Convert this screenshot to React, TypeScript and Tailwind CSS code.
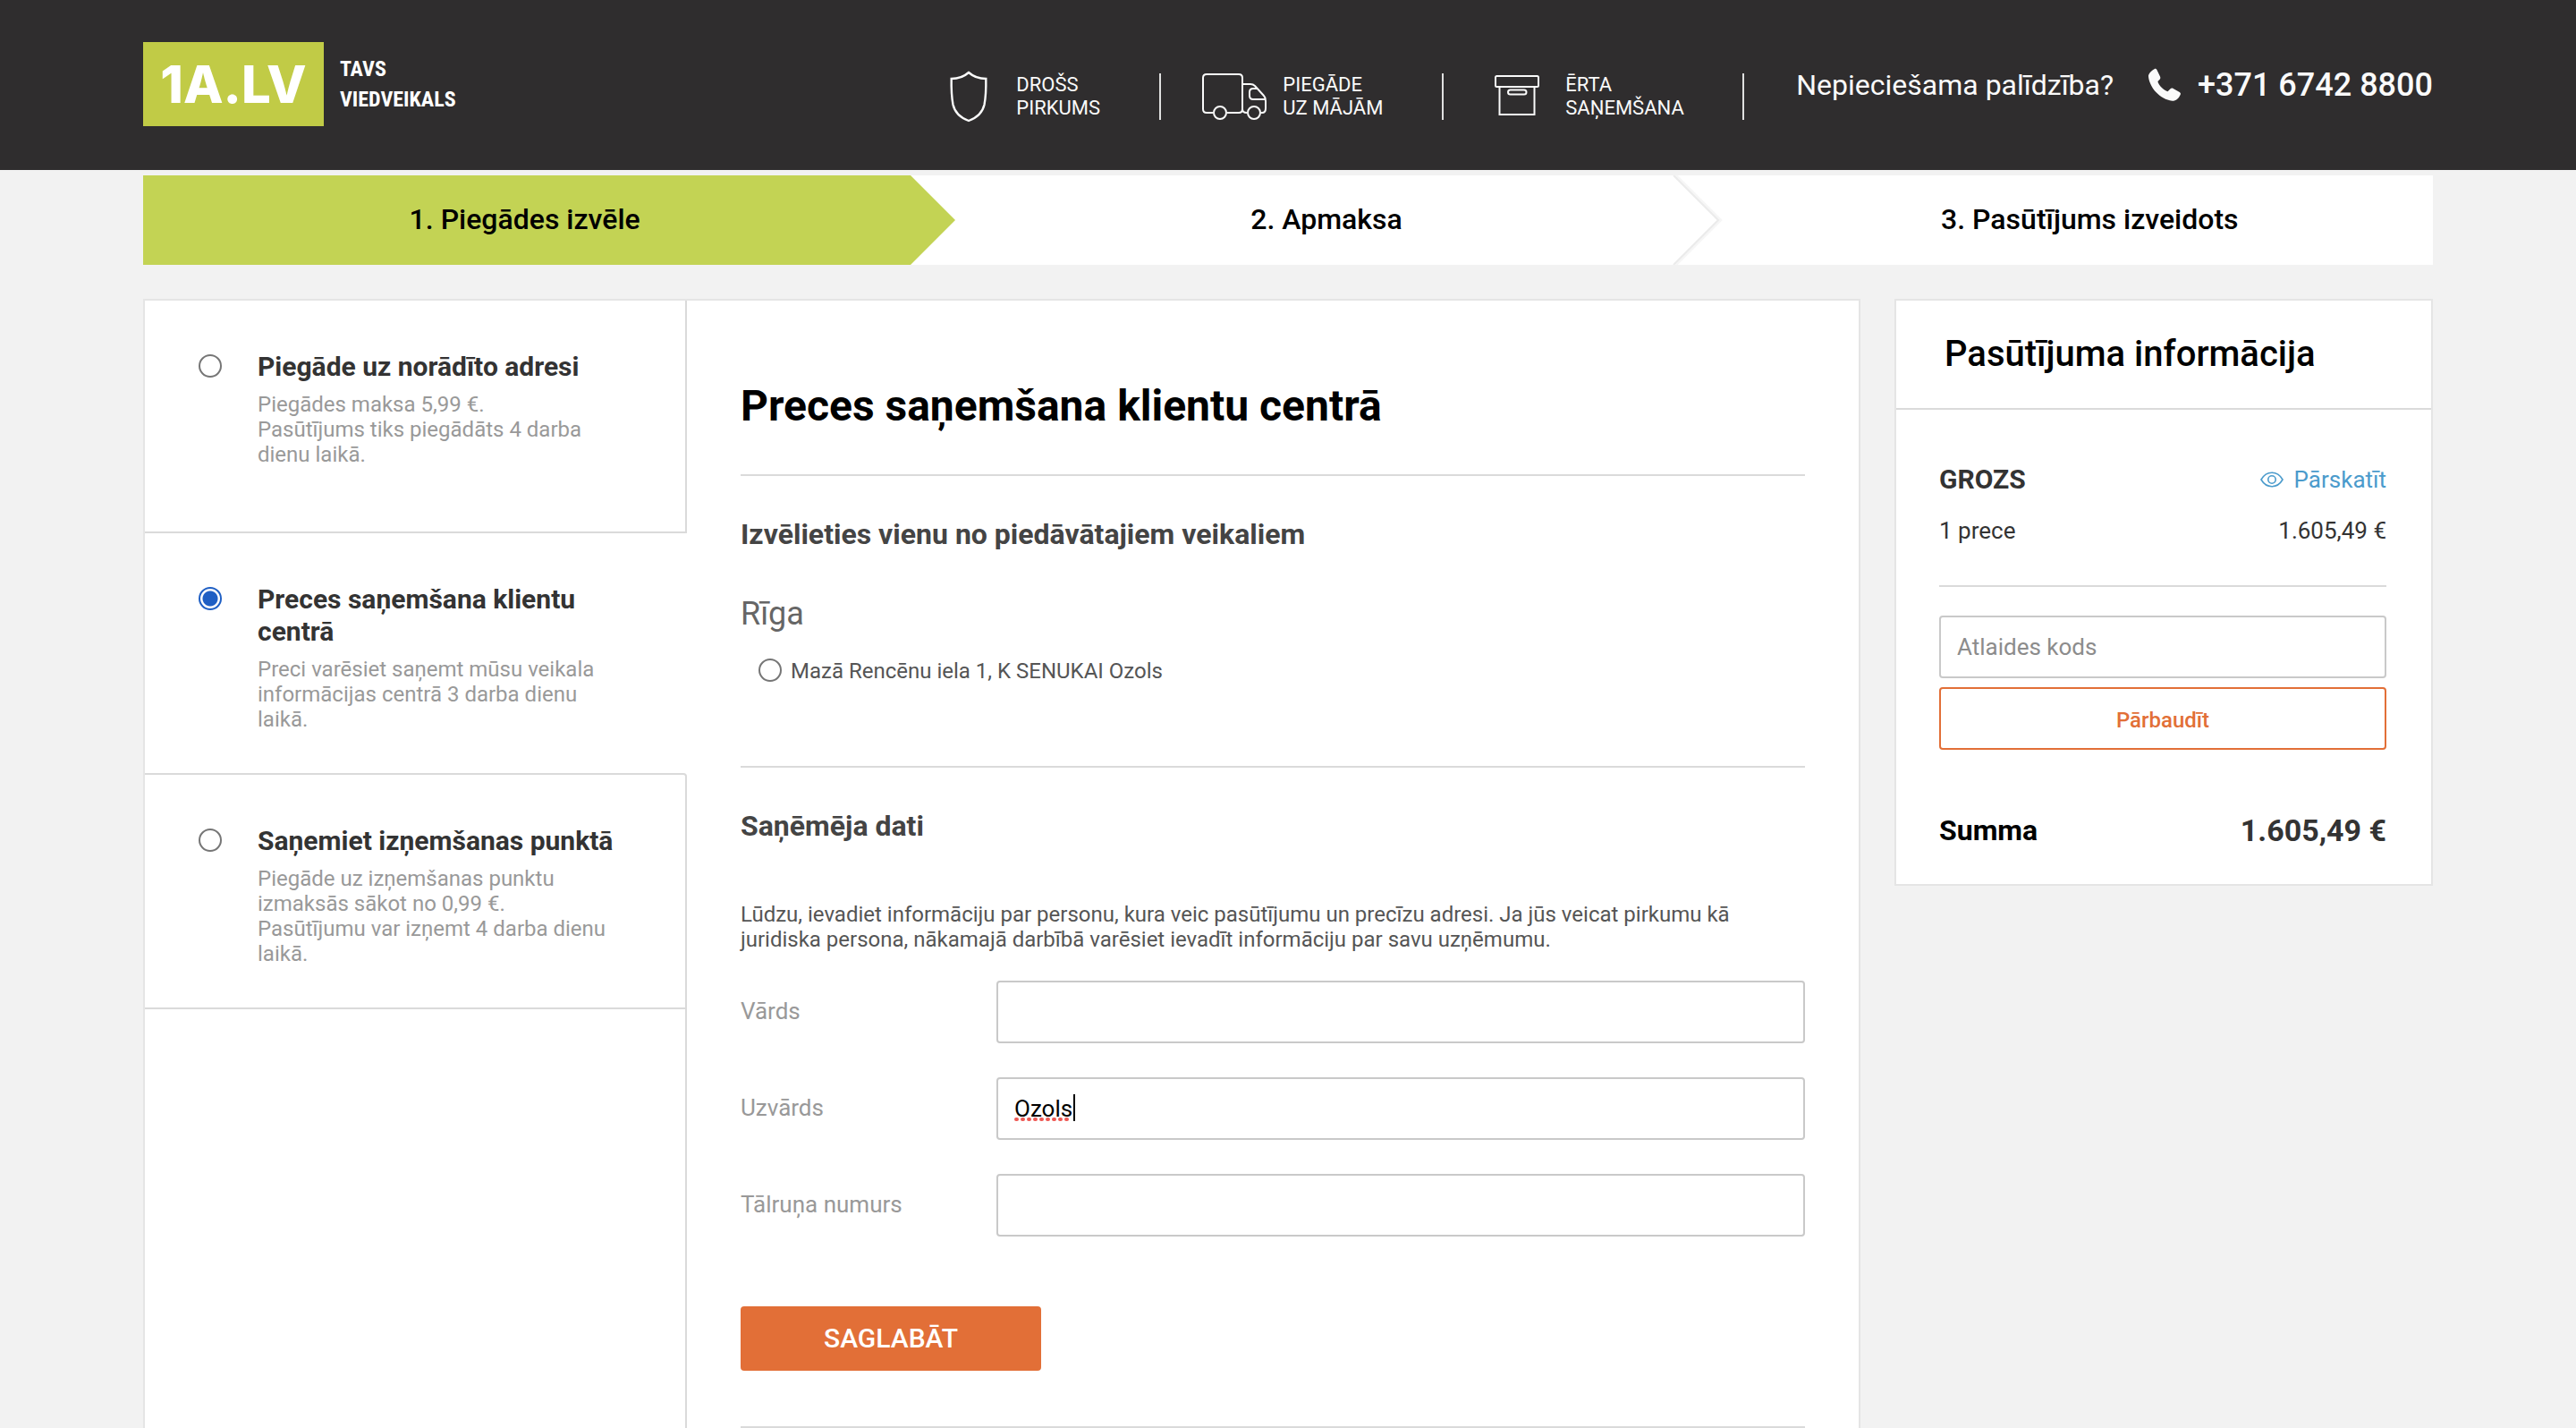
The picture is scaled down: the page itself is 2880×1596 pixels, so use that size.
import React from "react";

const radioBase =
  "size-[26px] shrink-0 appearance-none rounded-full border-2 border-[#767676] bg-white checked:border-[#1f5fc4] checked:bg-[radial-gradient(circle,#1f5fc4_0_8px,#ffffff_9px)]";
const fieldBase =
  "h-[70px] w-full rounded-sm border-2 border-[#c9c9c9] bg-white px-[18px] text-[26px] text-black outline-none placeholder:text-[#8c8c8c]";

function ShieldIcon() {
  return (
    <svg width="42" height="58" viewBox="0 0 42 58" fill="none" stroke="#fafafa" strokeWidth="2.4" aria-hidden="true">
      <path d="M21 2C16 6.500 9 9 1.700 9C1.500 19 2 30 3.500 38C5.500 47 13 53 21 56C29 53 36.500 47 38.500 38C40 30 40.500 19 40.300 9C33 9 26 6.500 21 2Z" />
    </svg>
  );
}

function TruckIcon() {
  return (
    <svg width="74" height="54" viewBox="0 0 74 54" fill="none" stroke="#fafafa" strokeWidth="2" aria-hidden="true">
      <path d="M13 45H6Q2 45 2 41V6Q2 2 6 2H42Q46 2 46 6V41Q46 45 42 45H29" />
      <path d="M46 13H55Q58 13 60 15L70 26Q72 28 72 32V40Q72 45 68 45H67M46 41Q46 45 51 45" />
      <path d="M62 18H58Q54 18 54 22V26Q54 30 58 30H72" />
      <circle cx="21" cy="45" r="7" />
      <circle cx="59" cy="45" r="7" />
    </svg>
  );
}

function BoxIcon() {
  return (
    <svg width="50" height="48" viewBox="0 0 50 48" fill="none" stroke="#fafafa" strokeWidth="2" aria-hidden="true">
      <rect x="1" y="1" width="48" height="12" rx="1.500" />
      <path d="M5.500 13V44H44.500V13" />
      <rect x="15" y="16.500" width="20.500" height="5" rx="2.500" />
    </svg>
  );
}

function PhoneIcon() {
  return (
    <svg width="38" height="38" viewBox="0 0 38 38" fill="#fafafa" aria-hidden="true">
      <path d="M7.500 1.300C8.700 .5 9.700 .8 10.400 2L14 9.500C14.600 10.900 14.400 12 13.400 13L11.400 15C12.500 19.500 18 25 22.500 26.200L25.500 23.300C26.400 22.500 27.500 22.400 28.700 23L35.800 27C37 27.800 37.300 28.800 36.600 30C34.500 34.500 31.500 37 27.500 36.800C14 35 2.500 22.500 1 9.800C.7 6.500 4 3.300 7.500 1.300Z" />
    </svg>
  );
}

function EyeIcon() {
  return (
    <svg width="26" height="18" viewBox="0 0 26 18" fill="none" stroke="#4b9bcc" strokeWidth="1.600" aria-hidden="true">
      <path d="M1 9C7-1.300 19-1.300 25 9C19 19.300 7 19.300 1 9Z" />
      <circle cx="13" cy="9" r="4.200" />
    </svg>
  );
}

function Feature({ icon, lines, width, iconWidth }: { icon: React.ReactNode; lines: string[]; width: string; iconWidth: string }) {
  return (
    <li className={"flex h-[52px] items-center border-r-2 border-[#e0e0e0] " + width}>
      <span className={"shrink-0 " + iconWidth}>{icon}</span>
      <span className="text-[22px] leading-[26px] whitespace-nowrap">
        {lines[0]}
        <br />
        {lines[1]}
      </span>
    </li>
  );
}

function Header() {
  return (
    <header className="h-[190px] bg-[#2f2d2e] text-[#fafafa]">
      <div className="mx-40 flex items-start">
        <a href="#" className="mt-[47px] flex items-center gap-[18px]">
          <span className="flex h-[94px] w-[202px] items-center justify-center bg-[#c1cb46] font-[Inter,sans-serif] text-[58px] leading-none font-extrabold text-white">
            1A.LV
          </span>
          <span className="font-['Roboto_Condensed','Liberation_Sans_Narrow',Roboto,sans-serif] text-[24px] leading-[34px] font-bold text-white">
            TAVS
            <br />
            VIEDVEIKALS
          </span>
        </a>
        <ul className="mt-[82px] ml-auto flex">
          <Feature icon={<ShieldIcon />} lines={["DROŠS", "PIRKUMS"]} width="w-[236px]" iconWidth="w-[74px]" />
          <Feature icon={<TruckIcon />} lines={["PIEGĀDE", "UZ MĀJĀM"]} width="ml-[45px] w-[271px]" iconWidth="w-[91px]" />
          <Feature icon={<BoxIcon />} lines={["ĒRTA", "SAŅEMŠANA"]} width="ml-[57px] w-[279px]" iconWidth="w-[79px]" />
        </ul>
        <div className="mt-[75px] ml-[58px] flex h-10 items-center">
          <span className="text-[32px] whitespace-nowrap">Nepieciešama palīdzība?</span>
          <a href="tel:+37167428800" className="ml-[38px] flex items-center gap-[18px] text-[36px] font-medium whitespace-nowrap">
            <PhoneIcon />
            +371 6742 8800
          </a>
        </div>
      </div>
    </header>
  );
}

function Steps() {
  return (
    <ol className="mx-40 mt-1.5 grid h-[100px] grid-cols-3 bg-white text-[32px] font-medium text-black">
      <li className="flex items-center justify-center bg-[#c3d354] pb-0.5">1. Piegādes izvēle</li>
      <li className="relative flex items-center justify-center pb-0.5 pl-[86px]">
        <svg className="absolute top-0 left-0" width="56" height="100" viewBox="0 0 56 100" aria-hidden="true">
          <path d="M0 0H5L55 50L5 100H0Z" fill="#c3d354" />
        </svg>
        2. Apmaksa
      </li>
      <li className="relative flex items-center justify-center pb-0.5 pl-[86px]">
        <svg className="absolute top-0 left-0" width="62" height="100" viewBox="0 0 62 100" fill="none" aria-hidden="true">
          <path d="M6 0L56 50L6 100" stroke="#f6f6f6" strokeWidth="4" />
          <path d="M4 0L54 50L4 100" stroke="#ebebeb" strokeWidth="2" />
        </svg>
        3. Pasūtījums izveidots
      </li>
    </ol>
  );
}

const deliveries = [
  {
    id: "address",
    title: "Piegāde uz norādīto adresi",
    text: ["Piegādes maksa 5,99 €.", "Pasūtījums tiks piegādāts 4 darba dienu laikā."],
    box: "min-h-[260px] border-r-2 border-b-2",
  },
  {
    id: "store",
    title: "Preces saņemšana klientu centrā",
    text: ["Preci varēsiet saņemt mūsu veikala informācijas centrā 3 darba dienu laikā."],
    box: "",
  },
  {
    id: "pickup",
    title: "Saņemiet izņemšanas punktā",
    text: ["Piegāde uz izņemšanas punktu izmaksās sākot no 0,99 €.", "Pasūtījumu var izņemt 4 darba dienu laikā."],
    box: "rounded-tr-sm border-y-2 border-r-2",
  },
];

function DeliveryOptions() {
  return (
    <div className="flex w-[606px] shrink-0 flex-col">
      {deliveries.map((d) => (
        <label key={d.id} className={"flex border-[#dadada] pt-14 pr-[76px] pb-[46px] pl-[60px] " + d.box}>
          <input type="radio" name="delivery" defaultChecked={d.id === "store"} className={radioBase + " mt-1"} />
          <span className="ml-10">
            <span className="block text-[30px] leading-9 font-bold text-[#333]">{d.title}</span>
            <span className="mt-2.5 block text-[24px] leading-7 text-[#999]">
              {d.text.map((t) => (
                <span key={t} className="block">
                  {t}
                </span>
              ))}
            </span>
          </span>
        </label>
      ))}
      <div className="flex-1 border-r-2 border-[#dadada]" />
    </div>
  );
}

function Field({ id, label, value, children }: { id: string; label: string; value?: string; children?: React.ReactNode }) {
  return (
    <div className="flex items-center">
      <label htmlFor={id} className="w-[286px] shrink-0 pb-0.5 text-[26px] text-[#999]">
        {label}
      </label>
      <div className="relative flex-1">
        <input id={id} type="text" defaultValue={value} spellCheck={false} className={"block " + fieldBase} />
        {children}
      </div>
    </div>
  );
}

function MainForm() {
  return (
    <form className="min-w-0 flex-1 px-[60px]">
      <h1 className="border-b-2 border-[#dadada] pt-[90px] pb-12 text-[48px] leading-[56px] font-bold text-black">
        Preces saņemšana klientu centrā
      </h1>
      <section className="border-b-2 border-[#dadada] pt-[45px] pb-[92px]">
        <h2 className="text-[32px] leading-10 font-bold text-[#444]">Izvēlieties vienu no piedāvātajiem veikaliem</h2>
        <h3 className="mt-[47px] text-[36px] leading-[44px] text-[#666]">Rīga</h3>
        <label className="mt-7 ml-5 flex gap-2.5 text-[24px] leading-7 text-[#555]">
          <input type="radio" name="store" className={radioBase} />
          Mazā Rencēnu iela 1, K SENUKAI Ozols
        </label>
      </section>
      <section className="border-b-2 border-[#dadada] pt-[45px] pb-[62px]">
        <h2 className="text-[32px] leading-10 font-bold text-[#444]">Saņēmēja dati</h2>
        <p className="mt-[65px] text-[24px] leading-7 text-[#555]">
          Lūdzu, ievadiet informāciju par personu, kura veic pasūtījumu un precīzu adresi. Ja jūs veicat pirkumu kā
          juridiska persona, nākamajā darbībā varēsiet ievadīt informāciju par savu uzņēmumu.
        </p>
        <div className="mt-8 grid gap-[38px]">
          <Field id="first-name" label="Vārds" />
          <Field id="last-name" label="Uzvārds" value="Ozols">
            <svg className="absolute top-4 left-5" width="72" height="40" viewBox="0 0 72 40" aria-hidden="true">
              <path d="M2 31H63" stroke="#ee5a55" strokeWidth="4" strokeLinecap="round" strokeDasharray="1 6" />
              <path d="M67 3V33" stroke="#000" strokeWidth="2" />
            </svg>
          </Field>
          <Field id="phone" label="Tālruņa numurs" />
        </div>
        <button type="submit" className="mt-[78px] block h-[72px] w-[336px] rounded-sm bg-[#e26f37] pb-0.5 text-[30px] font-medium text-white">
          SAGLABĀT
        </button>
      </section>
    </form>
  );
}

function Summary() {
  return (
    <aside className="w-[602px] shrink-0 self-start border-2 border-[#e5e5e5] bg-white">
      <h2 className="flex h-[122px] items-center border-b-2 border-[#dadada] pl-[54px] text-[40px] font-medium text-black">
        Pasūtījuma informācija
      </h2>
      <div className="pt-[62px] pr-[50px] pb-[38px] pl-12">
        <div className="flex items-center justify-between leading-8">
          <h3 className="text-[30px] font-bold text-[#333]">GROZS</h3>
          <a href="#" className="flex items-center gap-3 text-[26px] text-[#4b9bcc]">
            <EyeIcon />
            Pārskatīt
          </a>
        </div>
        <div className="mt-[25px] flex justify-between border-b-2 border-[#dadada] pb-[45px] text-[26px] leading-8 text-[#333]">
          <span>1 prece</span>
          <span>1.605,49 €</span>
        </div>
        <input type="text" aria-label="Atlaides kods" placeholder="Atlaides kods" className={"mt-8 block " + fieldBase} />
        <button type="button" className="mt-2.5 h-[70px] w-full rounded-sm border-2 border-[#e26f37] pt-1 text-[24px] font-medium text-[#e26f37]">
          Pārbaudīt
        </button>
        <div className="mt-[68px] flex items-center justify-between leading-[44px] font-bold">
          <span className="text-[32px] text-black">Summa</span>
          <span className="text-[34px] text-[#333]">1.605,49 €</span>
        </div>
      </div>
    </aside>
  );
}

export default function App() {
  return (
    <div className="flex min-h-screen flex-col bg-[#f2f2f2] font-[Roboto,sans-serif]">
      <Header />
      <Steps />
      <main className="mx-40 mt-[38px] flex flex-1 gap-[38px]">
        <div className="flex flex-1 border-2 border-b-0 border-[#e5e5e5] bg-white">
          <DeliveryOptions />
          <MainForm />
        </div>
        <Summary />
      </main>
    </div>
  );
}
